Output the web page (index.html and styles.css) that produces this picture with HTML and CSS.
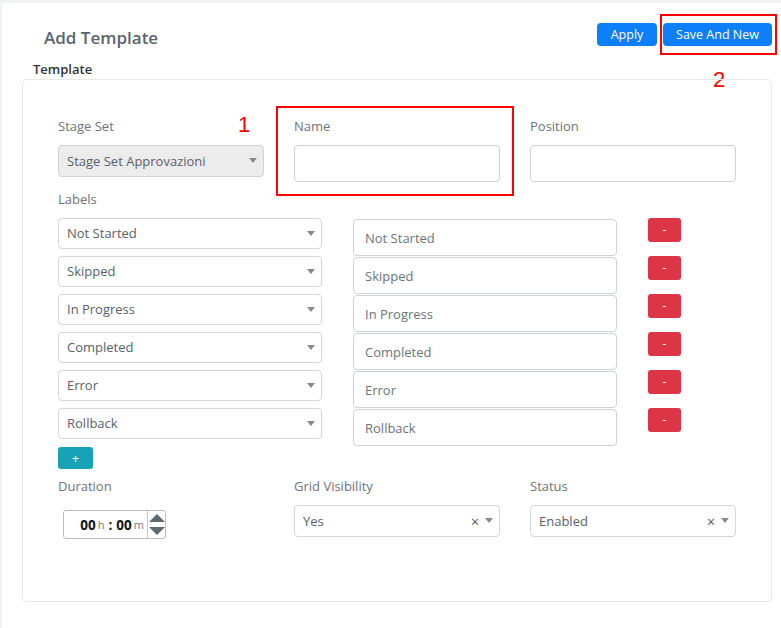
FILE: index.html
```html
<!DOCTYPE html>
<html lang="en">
<head>
  <meta charset="UTF-8" />
  <meta name="viewport" content="width=device-width, initial-scale=1.0"/>
  <title>Add Template</title>
  <link rel="stylesheet" href="styles.css">
</head>
<body>
  <div class="panel">
    <div class="header">
      <h2>Add Template</h2>
      <div class="actions">
        <button class="btn btn-blue apply">Apply</button>
        <button class="btn btn-blue save-new">Save And New</button>
        <!-- callout 2 -->
        <span class="mark mark-save"></span>
        <span class="num num-2">2</span>
      </div>
    </div>

    <div class="section-title">Template</div>

    <div class="card">
      <span class="num num-1">1</span>

      <div class="row3">
        <div class="field">
          <label>Stage Set</label>
          <div class="select disabled">Stage Set Approvazioni<span class="caret"></span></div>
        </div>
        <div class="field name-field">
          <label>Name</label>
          <input type="text" class="input">
          <span class="mark mark-name"></span>
        </div>
        <div class="field">
          <label>Position</label>
          <input type="text" class="input">
        </div>
      </div>

      <label class="labels-title">Labels</label>
      <div class="label-list" id="labelList"></div>
      <button class="btn btn-teal">+</button>

      <div class="row3 bottom-row">
        <div class="field">
          <label>Duration</label>
          <div class="time">
            <span class="t-num">00</span><span class="t-unit">h</span>
            <span class="t-sep">:</span>
            <span class="t-num">00</span><span class="t-unit">m</span>
            <span class="spin">
              <span class="spin-up"></span>
              <span class="spin-down"></span>
            </span>
          </div>
        </div>
        <div class="field">
          <label>Grid Visibility</label>
          <div class="select">Yes<span class="clear">×</span><span class="caret"></span></div>
        </div>
        <div class="field">
          <label>Status</label>
          <div class="select">Enabled<span class="clear">×</span><span class="caret"></span></div>
        </div>
      </div>
    </div>
  </div>

  <script>
    const labels = ["Not Started", "Skipped", "In Progress", "Completed", "Error", "Rollback"];
    const list = document.getElementById("labelList");

    labels.forEach(name => {
      const row = document.createElement("div");
      row.className = "label-row";
      row.innerHTML =
        '<div class="select">' + name + '<span class="caret"></span></div>' +
        '<input type="text" class="input label-input" value="' + name + '">' +
        '<button class="btn btn-red">-</button>';
      list.appendChild(row);
    });
  </script>
</body>
</html>
```

FILE: styles.css
```css
* {
  box-sizing: border-box;
}

body {
  margin: 0;
  background: #f1f2f4;
  font-family: 'Open Sans', 'Noto Sans', sans-serif;
  color: #495057;
}

.panel {
  margin: 3px 0 0 2px;
  background: #fff;
  min-height: calc(100vh - 3px);
  padding: 20px 9px 26px 20px;
}

.header {
  display: flex;
  align-items: center;
  justify-content: space-between;
  height: 23px;
}

h2 {
  margin: 0 0 0 22px;
  font-size: 17px;
  font-weight: 600;
  color: #5a646c;
  position: relative;
  top: 3px;
}

.actions {
  display: flex;
  gap: 6px;
  position: relative;
}

.btn {
  border: none;
  border-radius: 4px;
  color: #fff;
  font-family: inherit;
  cursor: pointer;
  padding: 0;
}

.btn-blue {
  background: #0d7ff8;
  height: 23px;
  font-size: 12.5px;
}

.apply {
  width: 60px;
}

.save-new {
  width: 109px;
}

.section-title {
  margin: 15px 0 0 11px;
  font-size: 13px;
  font-weight: 600;
  color: #333;
  line-height: 16px;
}

.card {
  margin-top: 2px;
  border: 1px solid #e6e8ea;
  border-radius: 4px;
  padding: 36px 35px 62px 35px;
  position: relative;
}

.row3 {
  display: flex;
  gap: 30px;
}

.field {
  width: 206px;
  display: flex;
  flex-direction: column;
  position: relative;
}

label {
  font-size: 13px;
  line-height: 20px;
  color: #6c747b;
  margin-bottom: 9px;
}

.select {
  height: 32px;
  border: 1px solid #d3d6da;
  border-radius: 4px;
  font-size: 13px;
  line-height: 30px;
  padding-left: 8px;
  color: #59616a;
  position: relative;
  background: #fff;
}

.select.disabled {
  background: #ececec;
  border-color: #cfd1d3;
}

.caret {
  position: absolute;
  right: 6px;
  top: 12px;
  border-left: 4px solid transparent;
  border-right: 4px solid transparent;
  border-top: 5px solid #8a8a8a;
}

.clear {
  position: absolute;
  right: 20px;
  top: 1px;
  font-size: 14px;
  color: #555;
}

.input {
  height: 37px;
  border: 1px solid #ced2d6;
  border-radius: 4px;
  font-family: inherit;
  font-size: 13px;
  color: #6c747b;
  padding: 0 11px;
  width: 100%;
  outline: none;
}

.labels-title {
  display: block;
  margin-top: 7px;
}

.label-row {
  display: flex;
  height: 38px;
  gap: 31px;
}

.label-row .select {
  width: 264px;
  height: 31px;
  line-height: 29px;
}

.label-input {
  width: 264px;
  margin-top: 1px;
}

.btn-red {
  background: #dc3545;
  width: 33px;
  height: 24px;
  border-radius: 3px;
  font-size: 12px;
  line-height: 20px;
}

.btn-teal {
  background: #18a2b8;
  width: 35px;
  height: 22px;
  border-radius: 3px;
  font-size: 13px;
  margin-top: 1px;
}

.bottom-row {
  margin-top: 7px;
}

.time {
  margin: 5px 0 0 5px;
  width: 103px;
  height: 29px;
  border: 1px solid #b9bdc1;
  border-radius: 3px;
  display: flex;
  align-items: center;
  justify-content: flex-end;
  font-size: 13.5px;
  position: relative;
}

.t-num {
  font-weight: 700;
  color: #111;
}

.t-unit {
  font-size: 11px;
  color: #777;
  margin: 0 2px 0 2px;
}

.t-sep {
  font-weight: 700;
  color: #222;
  margin: 0 4px 0 2px;
}

.spin {
  width: 18px;
  height: 27px;
  border-left: 1px solid #c2c6ca;
  margin-left: 1px;
  display: flex;
  flex-direction: column;
  align-items: center;
  justify-content: space-around;
}

.spin-up {
  border-left: 8px solid transparent;
  border-right: 8px solid transparent;
  border-bottom: 8px solid #5d6870;
}

.spin-down {
  border-left: 8px solid transparent;
  border-right: 8px solid transparent;
  border-top: 8px solid #5d6870;
}

/* red callouts */
.mark {
  position: absolute;
  border: 2px solid #f00;
  pointer-events: none;
}

.mark-save {
  left: 63px;
  top: -9px;
  width: 117px;
  height: 41px;
}

.mark-name {
  left: -18px;
  top: -10px;
  width: 238px;
  height: 90px;
}

.num {
  position: absolute;
  color: #f00;
  font-family: 'Liberation Sans', Arial, sans-serif;
  font-size: 22px;
  line-height: 22px;
}

.num-2 {
  left: 116px;
  top: 46px;
}

.num-1 {
  left: 215px;
  top: 34px;
}
```
